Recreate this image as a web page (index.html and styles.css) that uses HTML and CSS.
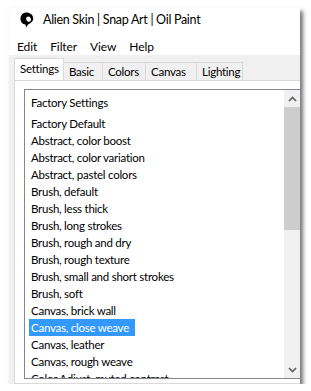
FILE: index.html
```html
<!DOCTYPE html>
<html lang="en">
<head>
	<meta charset="UTF-8">
	<title>Alien Skin | Snap Art | Oil Paint</title>
	<link rel="stylesheet" href="styles.css">
</head>
<body>
	<div class="window">
		<!-- title bar -->
		<div class="titlebar">
			<svg class="logo" width="14" height="16" viewBox="0 0 14 16">
				<path d="M3 1.5 C6 -0.5 12 1 13 5 C14 9 11 11 8 12.5 L6 15.5 L5.5 12.5 C2 12 0 9 0.5 6 C0.8 4 1.5 2.5 3 1.5 Z" fill="#000"/>
				<ellipse cx="8.6" cy="7.2" rx="2.3" ry="2.6" transform="rotate(-25 8.6 7.2)" fill="#fff"/>
			</svg>
			<span>Alien Skin | Snap Art | Oil Paint</span>
		</div>

		<!-- menu -->
		<div class="menubar">
			<span>Edit</span>
			<span>Filter</span>
			<span>View</span>
			<span>Help</span>
		</div>

		<div class="content">
			<div class="tabs">
				<div class="tab active settings">Settings</div>
				<div class="tab basic">Basic</div>
				<div class="tab colors">Colors</div>
				<div class="tab canvas">Canvas</div>
				<div class="tab lighting">Lighting</div>
			</div>
			<div class="page">
				<div class="listbox">
					<div class="items">
						<div class="group">Factory Settings</div>
						<div class="item">Factory Default</div>
						<div class="item">Abstract, color boost</div>
						<div class="item">Abstract, color variation</div>
						<div class="item">Abstract, pastel colors</div>
						<div class="item">Brush, default</div>
						<div class="item">Brush, less thick</div>
						<div class="item">Brush, long strokes</div>
						<div class="item">Brush, rough and dry</div>
						<div class="item">Brush, rough texture</div>
						<div class="item">Brush, small and short strokes</div>
						<div class="item">Brush, soft</div>
						<div class="item">Canvas, brick wall</div>
						<div class="item"><span class="selected">Canvas, close weave</span></div>
						<div class="item">Canvas, leather</div>
						<div class="item">Canvas, rough weave</div>
						<div class="item">Color Adjust, muted contrast</div>
					</div>
					<div class="scrollbar">
						<div class="arrow">
							<svg width="9" height="6" viewBox="0 0 9 6"><path d="M1 5 L4.5 1.5 L8 5" fill="none" stroke="#606060" stroke-width="1.6"/></svg>
						</div>
						<div class="thumb"></div>
						<div class="track"></div>
						<div class="arrow">
							<svg width="9" height="6" viewBox="0 0 9 6"><path d="M1 1 L4.5 4.5 L8 1" fill="none" stroke="#606060" stroke-width="1.6"/></svg>
						</div>
					</div>
				</div>
			</div>
		</div>
	</div>
</body>
</html>
```

FILE: styles.css
```css
body {
	margin: 0;
	background: #fff;
	font-family: Lato, "Liberation Sans", Arial, sans-serif;
	font-size: 11.5px;
	letter-spacing: -0.25px;
	color: #000;
}
.window {
	margin: 8px 0 0 9px;
	width: 291px;
	height: 376px;
	background: #fff;
	box-shadow: 3px 3px 4px rgba(0, 0, 0, 0.55);
	display: flex;
	flex-direction: column;
	overflow: hidden;
}
.titlebar {
	flex-shrink: 0;
	height: 28px;
	padding: 0 0 5px 11px;
	box-sizing: border-box;
	display: flex;
	align-items: center;
	gap: 9px;
	font-size: 12.5px;
	letter-spacing: -0.3px;
}
.menubar {
	flex-shrink: 0;
	height: 19px;
	padding: 2px 0 0 8px;
	box-sizing: border-box;
	display: flex;
	align-items: center;
	gap: 13px;
	font-size: 12px;
	letter-spacing: -0.1px;
}
.content {
	flex: 1;
	min-height: 0;
	background: #f0f0f0;
	padding: 3px 0 0 5px;
	display: flex;
	flex-direction: column;
}
.tabs {
	flex-shrink: 0;
	display: flex;
	align-items: flex-end;
	height: 22px;
}
.tab {
	box-sizing: border-box;
	height: 18px;
	line-height: 17px;
	padding-left: 5px;
	background: #f0f0f0;
	border: 1px solid #d9d9d9;
	border-bottom: none;
	margin-left: -1px;
}
.tab.active {
	height: 22px;
	line-height: 20px;
	background: #fff;
	margin-left: 0;
	position: relative;
	z-index: 1;
}
.settings { width: 50px; }
.basic { width: 40px; }
.colors { width: 44px; }
.canvas { width: 52px; }
.lighting { width: 47px; }
.page {
	flex: 1;
	min-height: 0;
	background: #fff;
	border: 1px solid #d9d9d9;
	border-right: none;
	padding: 8px 0 4px 9px;
	display: flex;
}
.listbox {
	flex: 1;
	border: 1px solid #828790;
	border-right: none;
	display: flex;
	overflow: hidden;
}
.items {
	flex: 1;
	padding: 2px 0 0 6px;
	white-space: nowrap;
	overflow: hidden;
}
.group {
	height: 21px;
	line-height: 21px;
	margin-bottom: 2px;
}
.item {
	height: 17px;
	line-height: 17px;
}
.selected {
	display: inline-block;
	background: #3399ff;
	color: #fff;
	padding: 0 6px 0 2px;
	margin-left: -2px;
}
.scrollbar {
	width: 16px;
	background: #f0f0f0;
	display: flex;
	flex-direction: column;
}
.arrow {
	height: 17px;
	display: flex;
	align-items: center;
	justify-content: center;
}
.thumb {
	height: 123px;
	background: #cdcdcd;
}
.track {
	flex: 1;
}
```
